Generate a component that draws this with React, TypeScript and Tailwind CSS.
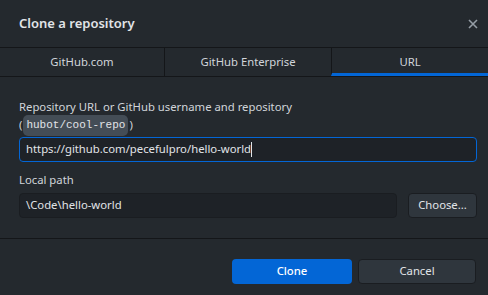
import React from "react";

const tabs = [
  { label: "GitHub.com", w: "w-[164px]" },
  { label: "GitHub Enterprise", w: "w-[167px]" },
  { label: "URL", w: "flex-1" },
];

export default function App() {
  return (
    <div
      className="w-[488px] h-[295px] bg-[#24292e] text-[#d1d5da] text-[11.3px] flex flex-col overflow-hidden"
      style={{ fontFamily: '"Noto Sans", "Open Sans", sans-serif' }}
    >
      {/* header */}
      <div className="h-[47px] flex items-center justify-between pl-[19px] pr-[5px]">
        <h1 className="text-[13px] font-semibold text-[#e1e4e8]">Clone a repository</h1>
        <button className="w-[20px] h-[20px] flex items-center justify-center text-[#959da5]">
          <svg width="10" height="10" viewBox="0 0 10 10" fill="none" stroke="currentColor" strokeWidth="1.6">
            <path d="M1 1L9 9M9 1L1 9" />
          </svg>
        </button>
      </div>

      {/* tabs */}
      <div className="h-[30px] flex border-y border-[#141619]">
        {tabs.map((t, i) => (
          <div
            key={t.label}
            className={`${t.w} flex items-center justify-center text-[#d1d5da] ${
              i > 0 ? "border-l border-[#141619]" : ""
            } ${i === 2 ? "border-b-[3px] border-b-[#0366d6] pt-[3px]" : ""}`}
          >
            {t.label}
          </div>
        ))}
      </div>

      {/* form */}
      <div className="flex flex-col pl-[19px] pr-[11px] pt-[22px]">
        <label className="leading-[16px]">Repository URL or GitHub username and repository</label>
        <div className="flex items-center h-[21px]">
          (
          <code
            className="h-[21px] flex items-center bg-[#444d56] rounded-[5px] px-[3px] mx-[1px] text-[11px] text-[#e1e4e8]"
            style={{ fontFamily: '"Liberation Mono", monospace' }}
          >
            hubot/cool-repo
          </code>
          )
        </div>
        <div className="mt-[1px] h-[25px] rounded-[4px] border border-[#0366d6] bg-[#1e2227] flex items-center px-[6px] text-[#e1e4e8]">
          https://github.com/pecefulpro/hello-world
          <span className="inline-block w-px h-[15px] bg-[#e1e4e8]" />
        </div>

        <label className="mt-[9px] leading-[17px]">Local path</label>
        <div className="mt-[5px] flex gap-[11px]">
          <div className="flex-1 h-[25px] rounded-[4px] border border-[#1a1d21] bg-[#1e2227] flex items-center px-[6px] text-[#e1e4e8]">
            \Code\hello-world
          </div>
          <button className="w-[69px] h-[25px] rounded-[4px] border border-[#1a1d21] bg-[#2f363d] text-[#e1e4e8]">
            Choose...
          </button>
        </div>
      </div>

      {/* footer */}
      <div className="mt-[20px] border-t border-[#141619] flex justify-end gap-[6px] px-[12px] pt-[20px]">
        <button className="w-[120px] h-[25px] rounded-[4px] bg-[#0366d6] text-white font-medium">Clone</button>
        <button className="w-[118px] h-[25px] rounded-[4px] border border-[#1a1d21] bg-[#2f363d] text-[#e1e4e8]">
          Cancel
        </button>
      </div>
    </div>
  );
}
